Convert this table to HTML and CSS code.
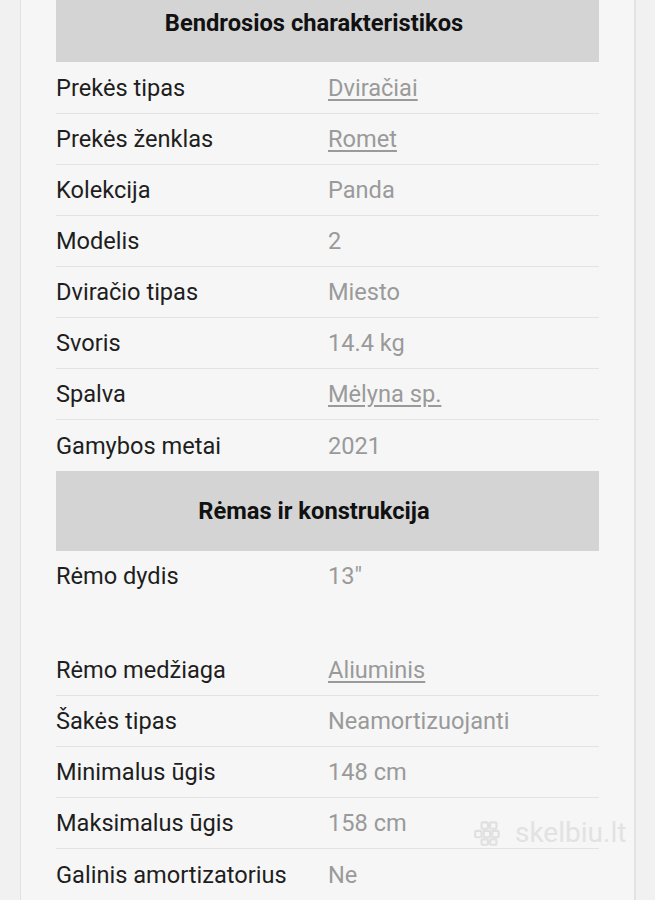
FILE: index.html
```html
<!DOCTYPE html>
<html lang="lt">
<head>
  <meta charset="UTF-8" />
  <meta name="viewport" content="width=device-width, initial-scale=1.0" />
  <title>Specifikacijos</title>
  <link rel="stylesheet" href="styles.css">
</head>
<body>

  <div class="panel">
    <div class="specs">
      <div class="spec-head">Bendrosios charakteristikos</div>
      <div class="spec-row first"><span class="label">Prekės tipas</span><a class="value" href="#">Dviračiai</a></div>
      <div class="spec-row"><span class="label">Prekės ženklas</span><a class="value" href="#">Romet</a></div>
      <div class="spec-row"><span class="label">Kolekcija</span><span class="value">Panda</span></div>
      <div class="spec-row"><span class="label">Modelis</span><span class="value">2</span></div>
      <div class="spec-row"><span class="label">Dviračio tipas</span><span class="value">Miesto</span></div>
      <div class="spec-row"><span class="label">Svoris</span><span class="value">14.4 kg</span></div>
      <div class="spec-row"><span class="label">Spalva</span><a class="value" href="#">Mėlyna sp.</a></div>
      <div class="spec-row last"><span class="label">Gamybos metai</span><span class="value">2021</span></div>

      <div class="spec-head">Rėmas ir konstrukcija</div>
      <div class="spec-row tall"><span class="label">Rėmo dydis</span><span class="value">13"</span></div>
      <div class="spec-row"><span class="label">Rėmo medžiaga</span><a class="value" href="#">Aliuminis</a></div>
      <div class="spec-row"><span class="label">Šakės tipas</span><span class="value">Neamortizuojanti</span></div>
      <div class="spec-row"><span class="label">Minimalus ūgis</span><span class="value">148 cm</span></div>
      <div class="spec-row"><span class="label">Maksimalus ūgis</span><span class="value">158 cm</span></div>
      <div class="spec-row last"><span class="label">Galinis amortizatorius</span><span class="value">Ne</span></div>
    </div>

    <!-- watermark -->
    <div class="watermark">
      <svg width="32" height="26" viewBox="0 0 30 24">
        <g fill="none" stroke="#e0e0e0" stroke-width="2">
          <rect x="8" y="2" width="6" height="6" rx="1" />
          <rect x="16" y="2" width="6" height="6" rx="1" />
          <rect x="2" y="10" width="6" height="6" rx="1" />
          <rect x="10" y="10" width="6" height="6" rx="1" />
          <rect x="18" y="10" width="6" height="6" rx="1" />
          <rect x="8" y="18" width="6" height="5" rx="1" />
          <rect x="16" y="18" width="6" height="5" rx="1" />
        </g>
      </svg>
      <span>skelbiu.lt</span>
    </div>
  </div>

</body>
</html>
```

FILE: styles.css
```css
body {
  margin: 0;
  background: #f1f1f1;
  font-family: Roboto, "Noto Sans", sans-serif;
  overflow: hidden;
  height: 900px;
}
.panel {
  position: relative;
  display: flow-root;
  margin: 0 19px 0 20px;
  height: 900px;
  background: #f6f6f6;
  border-left: 1px solid #e2e2e2;
  border-right: 2px solid #e2e2e2;
  padding: 0 35px;
  box-sizing: border-box;
}
.specs {
  margin-top: -17px;
}
/* Section headers */
.spec-head {
  background: #d4d4d4;
  height: 80px;
  display: flex;
  align-items: center;
  justify-content: center;
  padding-right: 27px;
  font-size: 23.7px;
  font-weight: bold;
  color: #111;
}
.spec-head:first-child {
  height: 79px;
}
.spec-row {
  display: flex;
  align-items: center;
  height: 50px;
  border-bottom: 1px solid #e3e3e3;
  font-size: 23.6px;
}
.spec-row.first {
  height: 51px;
}
.spec-row.last {
  border-bottom: none;
  height: 51px;
}
.spec-row.tall {
  height: 94px;
  align-items: flex-start;
  padding-top: 11px;
  box-sizing: border-box;
  border-bottom: none;
}
.label {
  width: 272px;
  color: #1e1e1e;
}
.value {
  color: #9a9a9a;
}
a.value {
  text-decoration: underline;
  text-underline-offset: 3px;
}
/* Watermark */
.watermark {
  position: absolute;
  left: 452px;
  top: 816px;
  display: flex;
  align-items: center;
  gap: 10px;
  font-size: 28px;
  color: #e2e2e2;
  white-space: nowrap;
}
```
